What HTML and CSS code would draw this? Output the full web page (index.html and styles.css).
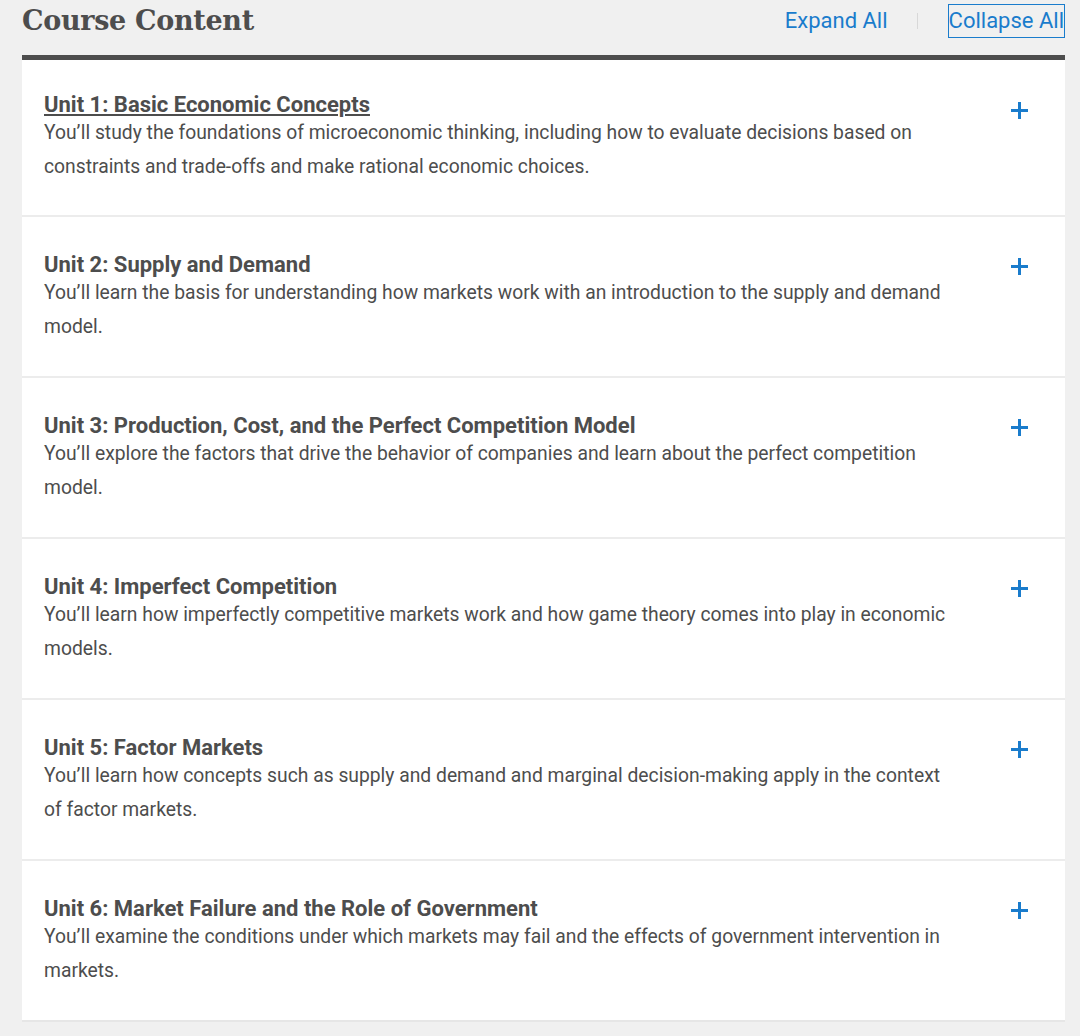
FILE: index.html
```html
<!DOCTYPE html>
<html lang="en">
<head>
<meta charset="utf-8">
<title>Course Content</title>
<link rel="stylesheet" href="styles.css">
</head>
<body>
<div class="page">
  <header class="head">
    <h2 class="head-title">Course Content</h2>
    <div class="head-actions">
      <a class="link" href="#">Expand All</a>
      <span class="sep"></span>
      <a class="link link-focus" href="#">Collapse All</a>
    </div>
  </header>
  <section class="card">
    <div class="row">
      <div class="row-text">
        <h3 class="row-title"><a class="under" href="#">Unit 1: Basic Economic Concepts</a></h3>
        <p class="row-desc">You’ll study the foundations of microeconomic thinking, including how to evaluate decisions based on constraints and trade-offs and make rational economic choices.</p>
      </div>
      <span class="plus"></span>
    </div>
    <div class="row">
      <div class="row-text">
        <h3 class="row-title">Unit 2: Supply and Demand</h3>
        <p class="row-desc">You’ll learn the basis for understanding how markets work with an introduction to the supply and demand model.</p>
      </div>
      <span class="plus"></span>
    </div>
    <div class="row">
      <div class="row-text">
        <h3 class="row-title">Unit 3: Production, Cost, and the Perfect Competition Model</h3>
        <p class="row-desc">You’ll explore the factors that drive the behavior of companies and learn about the perfect competition model.</p>
      </div>
      <span class="plus"></span>
    </div>
    <div class="row">
      <div class="row-text">
        <h3 class="row-title">Unit 4: Imperfect Competition</h3>
        <p class="row-desc">You’ll learn how imperfectly competitive markets work and how game theory comes into play in economic models.</p>
      </div>
      <span class="plus"></span>
    </div>
    <div class="row">
      <div class="row-text">
        <h3 class="row-title">Unit 5: Factor Markets</h3>
        <p class="row-desc">You’ll learn how concepts such as supply and demand and marginal decision-making apply in the context of factor markets.</p>
      </div>
      <span class="plus"></span>
    </div>
    <div class="row">
      <div class="row-text">
        <h3 class="row-title">Unit 6: Market Failure and the Role of Government</h3>
        <p class="row-desc">You’ll examine the conditions under which markets may fail and the effects of government intervention in markets.</p>
      </div>
      <span class="plus"></span>
    </div>
  </section>
</div>
</body>
</html>
```
FILE: styles.css
```css
html, body {
  margin: 0;
  padding: 0;
  background: #f0f0f0;
}
body {
  font-family: Roboto, "Liberation Sans", Arial, sans-serif;
  color: #4d4d4d;
}
.page {
  padding: 0 15px 0 22px;
}
.head {
  height: 55px;
  display: flex;
  align-items: flex-start;
  justify-content: space-between;
}
.head-title {
  margin: 0;
  padding-top: 4px;
  font-family: "DejaVu Serif", "Liberation Serif", serif;
  font-weight: bold;
  font-size: 27px;
  line-height: 34px;
  color: #4d4d4d;
  letter-spacing: -0.3px;
}
.head-actions {
  display: flex;
  align-items: center;
  padding-top: 5px;
}
.link {
  font-size: 22px;
  line-height: 32px;
  color: #1a7ccc;
  text-decoration: none;
  padding: 0;
}
.sep {
  display: block;
  width: 1px;
  height: 16px;
  background: #d8d8d8;
  margin: 0 31px 0 29px;
}
.link-focus {
  outline: 1px solid #1a7ccc;
  margin-right: 1px;
}
.card {
  background: #fff;
  border-top: 5px solid #4d4d4d;
  border-bottom: 2px solid #e6e6e6;
}
.row {
  display: flex;
  align-items: flex-start;
  padding: 35px 0 32px 22px;
  border-bottom: 2px solid #ececec;
}
.row:first-child {
  padding-top: 32px;
  padding-bottom: 31px;
}
.row:last-child {
  border-bottom: 0;
}
.row-text {
  width: 912px;
}
.row-title {
  margin: 0;
  font-size: 22px;
  line-height: 26px;
  font-weight: bold;
  color: #4d4d4d;
}
.under {
  color: #4d4d4d;
  text-decoration: underline;
  text-underline-offset: 2px;
}
.row-desc {
  margin: -2px 0 0;
  font-size: 19.3px;
  line-height: 34px;
  color: #4d4d4d;
}
.plus {
  position: relative;
  display: block;
  width: 17px;
  height: 17px;
  margin: 6px 0 0 55px;
}
.row:first-child .plus {
  margin-top: 10px;
}
.plus::before,
.plus::after {
  content: "";
  position: absolute;
  background: #1a7ccc;
}
.plus::before {
  left: 0;
  right: 0;
  top: 7px;
  height: 3px;
}
.plus::after {
  top: 0;
  bottom: 0;
  left: 7px;
  width: 3px;
}
```
